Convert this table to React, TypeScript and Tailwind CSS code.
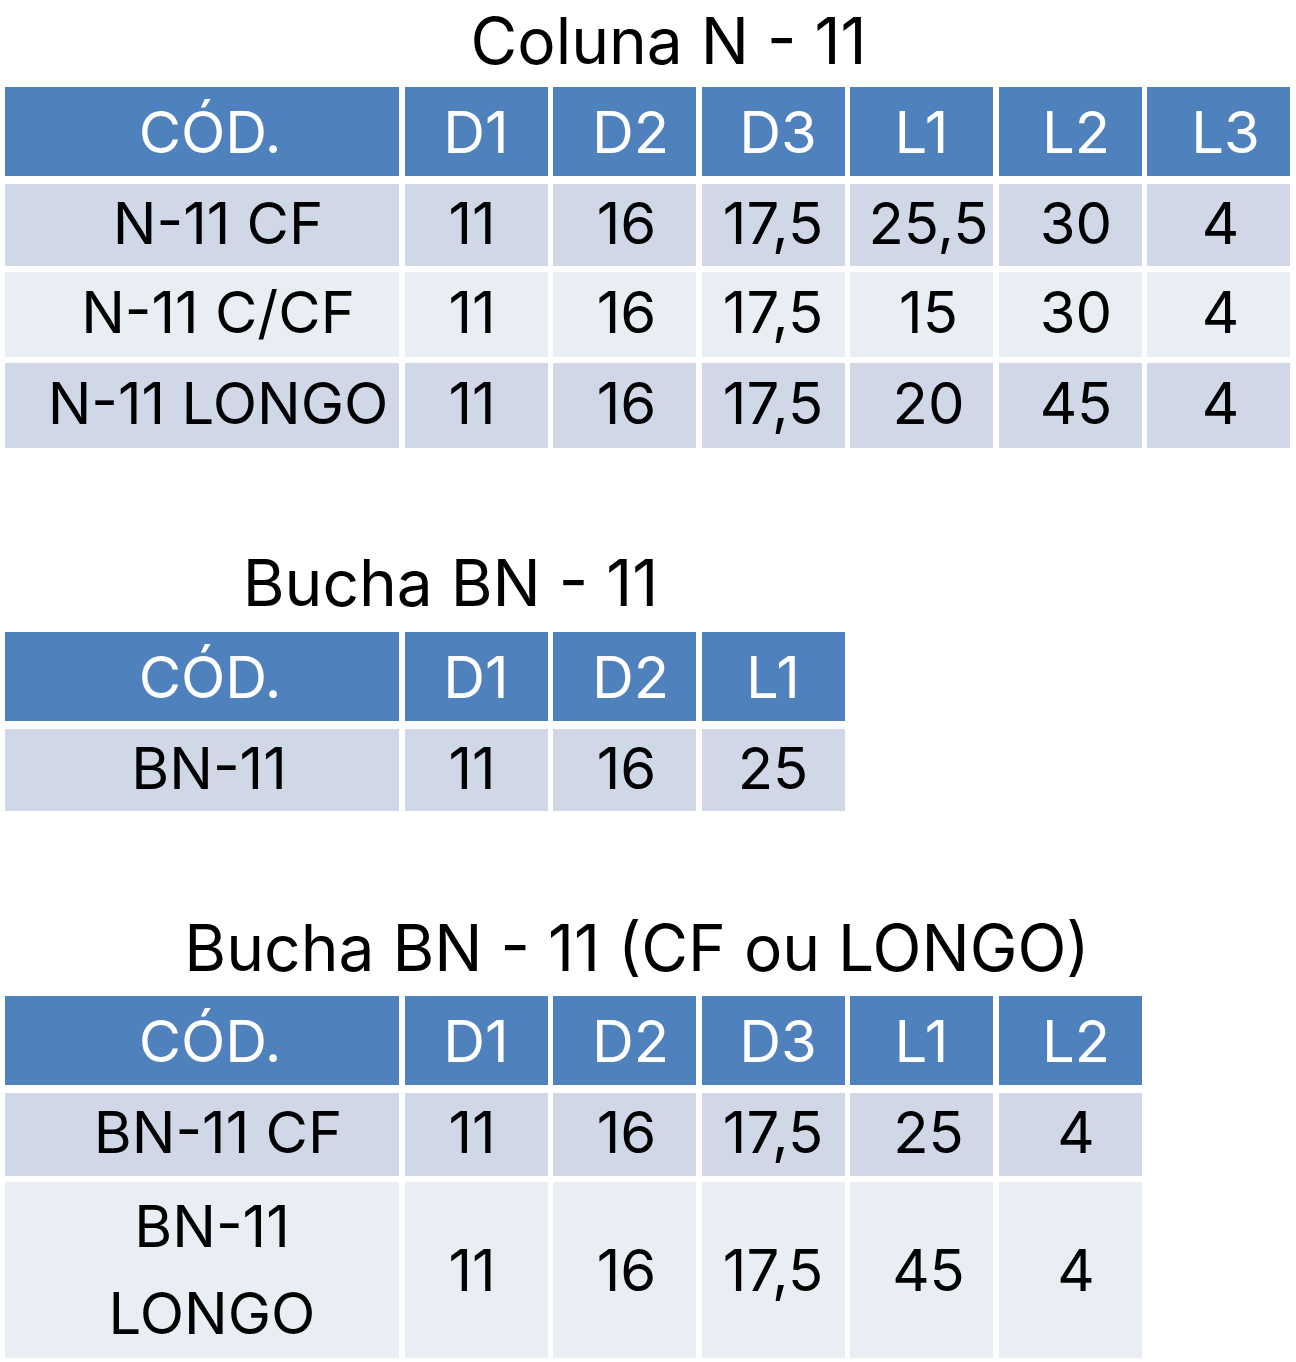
const font = { fontFamily: 'Inter, "Noto Sans", sans-serif' };

type Row = { cells: string[]; tall?: boolean; shade: 'dark' | 'light'; h: string; firstPad?: string };

// small per-column nudges so the glyphs land where the reference has them
const headPad = ['pl-4', '', 'pl-[12px]', 'pl-[10px]', '', 'pl-[12px]', 'pl-[14px]'];
const bodyPad = ['pl-[32px]', 'pr-[8px]', 'pl-[4px]', '', 'pl-[14px]', 'pl-[12px]', 'pl-[4px]'];

const Header = ({ cols, grid, pads = headPad }: { cols: string[]; grid: string; pads?: string[] }) => (
    <div className={`grid ${grid} gap-x-[5.5px]`}>
        {cols.map((c, i) => (
            <div
                key={i}
                className={`h-[89px] bg-[#4f81bd] text-white flex items-center justify-center text-[58px] leading-none ${pads[i]}`}
            >
                {c}
            </div>
        ))}
    </div>
);

const Body = ({ rows, grid }: { rows: Row[]; grid: string }) => (
    <div className="flex flex-col gap-y-[6px] mt-[8px]">
        {rows.map((r, ri) => (
            <div key={ri} className={`grid ${grid} gap-x-[5.5px]`}>
                {r.cells.map((c, i) => (
                    <div
                        key={i}
                        className={`${r.h} ${r.shade === 'dark' ? 'bg-[#d0d8e8]' : 'bg-[#e9edf4]'} text-black flex items-center justify-center text-center text-[58px] ${r.tall ? 'leading-[87px]' : 'leading-none pb-[5px]'} ${i === 0 && r.firstPad ? r.firstPad : bodyPad[i]} ${i === 0 ? 'whitespace-pre-line' : ''}`}
                    >
                        {c}
                    </div>
                ))}
            </div>
        ))}
    </div>
);

const grid7 = 'grid-cols-[394px_143px_143px_143px_143px_143px_143px]';
const grid4 = 'grid-cols-[394px_143px_143px_143px]';
const grid6 = 'grid-cols-[394px_143px_143px_143px_143px_143px]';

export default function App() {
    return (
        <div className="bg-white w-[1296px] min-h-[1362px] pl-[5px]" style={font}>
            {/* Coluna N - 11 */}
            <div className="w-[1285px]">
                <h1 className="h-[87px] flex items-center justify-center pl-[42px] text-[64px] text-black pb-[6px]">Coluna N - 11</h1>
                <Header cols={['CÓD.', 'D1', 'D2', 'D3', 'L1', 'L2', 'L3']} grid={grid7} />
                <Body
                    grid={grid7}
                    rows={[
                        { cells: ['N-11 CF', '11', '16', '17,5', '25,5', '30', '4'], shade: 'dark', h: 'h-[82px]' },
                        { cells: ['N-11 C/CF', '11', '16', '17,5', '15', '30', '4'], shade: 'light', h: 'h-[85px]' },
                        { cells: ['N-11 LONGO', '11', '16', '17,5', '20', '45', '4'], shade: 'dark', h: 'h-[85px]' },
                    ]}
                />
            </div>

            {/* Bucha BN - 11 */}
            <div className="w-[839px] mt-[95px]">
                <h2 className="h-[89px] flex items-center justify-center pl-[52px] text-[64px] text-black pb-[10px]">Bucha BN - 11</h2>
                <Header cols={['CÓD.', 'D1', 'D2', 'L1']} grid={grid4} pads={['pl-4', '', 'pl-[12px]', '']} />
                <Body grid={grid4} rows={[{ cells: ['BN-11', '11', '16', '25'], shade: 'dark', h: 'h-[82px]', firstPad: 'pl-[14px]' }]} />
            </div>

            {/* Bucha BN - 11 (CF ou LONGO) */}
            <div className="w-[1136px] mt-[97px]">
                <h2 className="h-[88px] flex items-center justify-center pl-[128px] text-[64px] text-black whitespace-nowrap pb-[8px]">Bucha BN - 11 (CF ou LONGO)</h2>
                <Header cols={['CÓD.', 'D1', 'D2', 'D3', 'L1', 'L2']} grid={grid6} />
                <Body
                    grid={grid6}
                    rows={[
                        { cells: ['BN-11 CF', '11', '16', '17,5', '25', '4'], shade: 'dark', h: 'h-[83px]' },
                        { cells: ['BN-11\nLONGO', '11', '16', '17,5', '45', '4'], shade: 'light', h: 'h-[176px]', tall: true, firstPad: 'pl-[20px]' },
                    ]}
                />
            </div>
        </div>
    );
}
